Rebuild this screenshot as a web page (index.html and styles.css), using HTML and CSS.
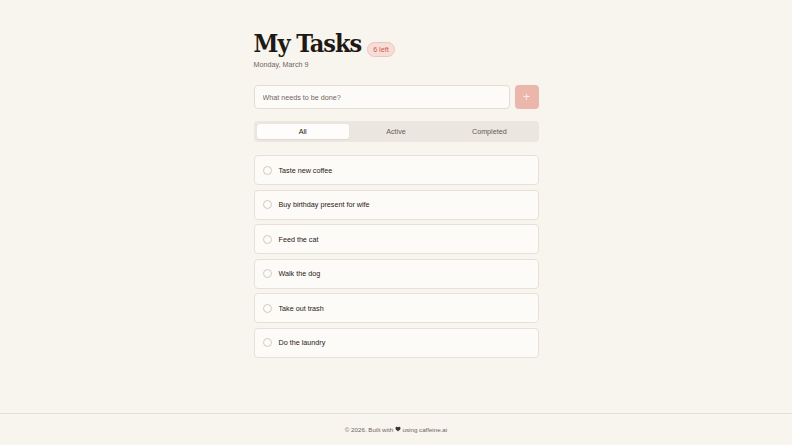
FILE: index.html
```html
<!DOCTYPE html>
<html lang="en">
<head>
    <meta charset="UTF-8">
    <meta name="viewport" content="width=device-width, initial-scale=1.0">
    <title>My Tasks</title>
    <link rel="stylesheet" href="styles.css">
</head>
<body>
    <div class="page">
        <main class="main">
            <div class="title-row">
                <h1 class="title">My Tasks</h1>
                <span class="badge">6 left</span>
            </div>
            <p class="date">Monday, March 9</p>

            <form class="add-form">
                <input class="add-input" type="text" placeholder="What needs to be done?">
                <button class="add-btn" type="button">+</button>
            </form>

            <div class="tabs">
                <button class="tab active" type="button">All</button>
                <button class="tab" type="button">Active</button>
                <button class="tab" type="button">Completed</button>
            </div>

            <ul class="task-list">
                <li class="task"><span class="check"></span><span class="task-text">Taste new coffee</span></li>
                <li class="task"><span class="check"></span><span class="task-text">Buy birthday present for wife</span></li>
                <li class="task"><span class="check"></span><span class="task-text">Feed the cat</span></li>
                <li class="task"><span class="check"></span><span class="task-text">Walk the dog</span></li>
                <li class="task"><span class="check"></span><span class="task-text">Take out trash</span></li>
                <li class="task"><span class="check"></span><span class="task-text">Do the laundry</span></li>
            </ul>
        </main>

        <footer class="footer">
            © 2026. Built with
            <svg class="heart" viewBox="0 0 24 24" width="6" height="6"><path d="M12 21.5l-1.5-1.4C5.2 15.4 2 12.5 2 8.5 2 5.4 4.4 3 7.5 3c1.7 0 3.4.8 4.5 2.1C13.1 3.8 14.8 3 16.5 3 19.6 3 22 5.4 22 8.5c0 4-3.2 6.9-8.5 11.6L12 21.5z" fill="currentColor"/></svg>
            using caffeine.ai
        </footer>
    </div>
</body>
</html>
```

FILE: styles.css
```css
* {
    box-sizing: border-box;
}
body {
    margin: 0;
    background-color: #f8f4ee;
    font-family: "Liberation Sans", Arial, sans-serif;
    color: #2a2420;
}
.page {
    min-height: 100vh;
    display: flex;
    flex-direction: column;
}
.main {
    flex: 1;
    width: 285px;
    margin: 0 auto;
    padding-top: 30px;
}
.title-row {
    display: flex;
    align-items: baseline;
    gap: 6px;
}
.title {
    margin: 0;
    font-family: "DejaVu Serif Condensed", "DejaVu Serif", serif;
    font-size: 25px;
    line-height: 27px;
    font-weight: 700;
    letter-spacing: -1px;
    color: #1f1915;
}
.badge {
    display: inline-block;
    padding: 3px 5px;
    font-size: 7.2px;
    line-height: 7px;
    color: #d0584a;
    background-color: #f7ddd7;
    border: 0.5px solid #efc4bb;
    border-radius: 999px;
}
.date {
    margin: 3px 0 0;
    font-size: 7.2px;
    line-height: 10px;
    color: #6f665e;
}
.add-form {
    display: flex;
    gap: 5px;
    margin-top: 15px;
}
.add-input {
    flex: 1;
    height: 24px;
    padding: 0 8px;
    font-family: inherit;
    font-size: 7.2px;
    color: #2a2420;
    background-color: #fdfbf8;
    border: 1px solid #e4ddd5;
    border-radius: 4px;
    outline: none;
}
.add-input::placeholder {
    color: #6f665e;
}
.add-btn {
    width: 24px;
    height: 24px;
    padding: 0;
    font-family: inherit;
    font-size: 12px;
    font-weight: 300;
    line-height: 1;
    color: #fbece8;
    background-color: #ebb6ab;
    border: none;
    border-radius: 4px;
    cursor: pointer;
}
.tabs {
    display: grid;
    grid-template-columns: 1fr 1fr 1fr;
    gap: 1px;
    margin-top: 12px;
    padding: 3px;
    background-color: #ebe6df;
    border-radius: 4px;
}
.tab {
    height: 15px;
    padding: 0;
    font-family: inherit;
    font-size: 7.2px;
    color: #665d55;
    background: none;
    border: none;
    border-radius: 3px;
    cursor: pointer;
}
.tab.active {
    color: #1a1512;
    background-color: #fefdfb;
    box-shadow: 0 0.5px 1px rgba(0, 0, 0, 0.06);
}
.task-list {
    list-style: none;
    margin: 13px 0 0;
    padding: 0;
    display: flex;
    flex-direction: column;
    gap: 4.5px;
}
.task {
    display: flex;
    align-items: center;
    gap: 7px;
    height: 30px;
    padding: 0 8px;
    background-color: #fdfbf8;
    border: 1px solid #e6e0d8;
    border-radius: 4px;
}
.check {
    width: 9px;
    height: 9px;
    border: 1px solid #d2c9c0;
    border-radius: 50%;
    background-color: #fdfbf8;
}
.task-text {
    font-size: 7.2px;
    color: #1f1915;
}
.footer {
    padding: 11.5px 0;
    border-top: 1px solid #e6e0d8;
    text-align: center;
    font-size: 6.2px;
    line-height: 8px;
    color: #6f665e;
}
.heart {
    vertical-align: -0.5px;
    color: #3b342e;
}
```
